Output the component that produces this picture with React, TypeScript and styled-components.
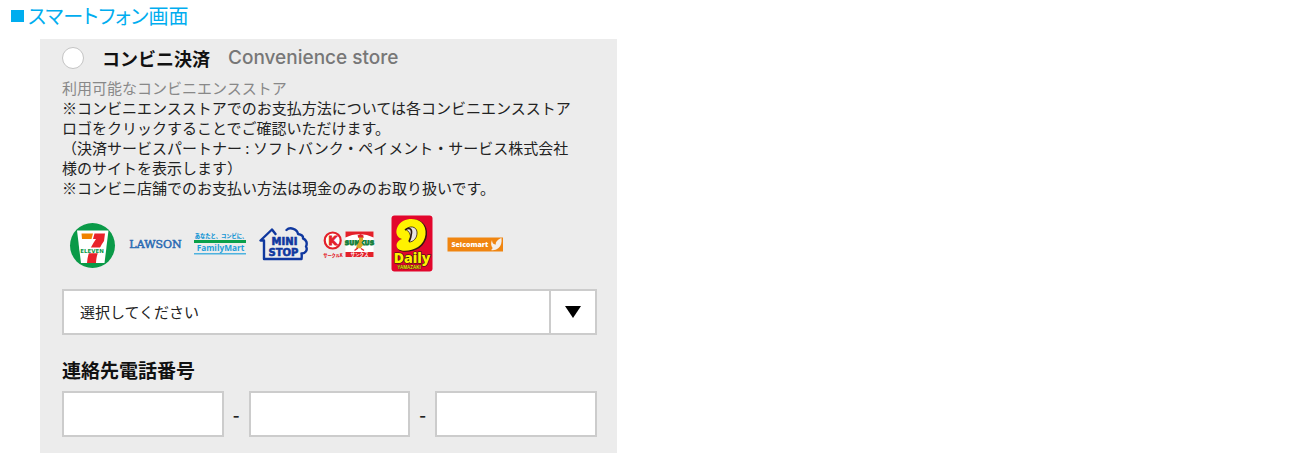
import React from "react";
import styled, { createGlobalStyle } from "styled-components";

const GlobalStyle = createGlobalStyle`
  * { box-sizing: border-box; }
  body {
    margin: 0;
    background: #fff;
    color: #222;
    font-family: "Noto Sans CJK JP", sans-serif;
    font-size: 15px;
    line-height: 20px;
  }
`;

const Page = styled.main`
  display: flow-root;
`;

const PageTitle = styled.h1`
  display: flex;
  align-items: center;
  gap: 4px;
  margin: 0;
  padding: 0 11px 7px;
  color: #00adef;
  font-size: 20px;
  font-weight: 400;
  line-height: 32px;
  font-feature-settings: "palt";

  &::before {
    content: "";
    width: 13px;
    height: 12px;
    background: currentColor;
  }
`;

const Panel = styled.form`
  width: 44%;
  margin-left: 40px;
  padding: 5px 20px 16px 22px;
  background: #ececec;
`;

const MethodLabel = styled.label`
  display: flex;
  align-items: center;
  height: 28px;
  margin-bottom: 6px;
  white-space: nowrap;
`;

const Radio = styled.input`
  appearance: none;
  flex: none;
  width: 22px;
  height: 22px;
  margin: 0 18px 0 0;
  border: 1px solid #c4c4c4;
  border-radius: 50%;
  background: #fff;

  &:checked {
    border: 6px solid #333;
  }
`;

const MethodName = styled.span`
  margin-right: 18px;
  color: #111;
  font-size: 18px;
  font-weight: 700;
`;

const MethodNameEn = styled.span`
  color: #777;
  font-family: Inter, sans-serif;
  font-size: 19px;
  font-weight: 500;
`;

const Note = styled.p<{ $muted?: boolean }>`
  margin: 0;
  color: ${(p) => (p.$muted ? "#888" : "#222")};
  white-space: nowrap;
`;

const StoreList = styled.nav`
  display: flex;
  gap: 12px;
  margin: 16px 0 17px 7px;
`;

const StoreLink = styled.a`
  display: block;
  flex: none;
  height: 58px;

  svg {
    display: block;
    overflow: visible;
  }
`;

const SelectBox = styled.div`
  display: grid;
  grid-template-columns: 1fr 46px;
  height: 46px;
  border: 2px solid #ccc;
  background: #fff;
`;

const Select = styled.select`
  grid-area: 1 / 1 / 2 / 3;
  appearance: none;
  min-width: 0;
  padding: 0 56px 0 16px;
  border: 0;
  background: transparent;
  color: #222;
  font: inherit;
`;

const SelectArrow = styled.span`
  grid-area: 1 / 2;
  display: flex;
  align-items: center;
  justify-content: center;
  border-left: 2px solid #ccc;
  pointer-events: none;
`;

const PhoneGroup = styled.fieldset`
  min-width: 0;
  margin: 0;
  padding: 0;
  border: 0;
`;

const PhoneLegend = styled.legend`
  padding: 25px 0 11px;
  color: #111;
  font-size: 19px;
  font-weight: 700;
`;

const PhoneFields = styled.div`
  display: flex;
  align-items: center;
`;

const PhoneInput = styled.input`
  flex: 1;
  min-width: 0;
  width: 0;
  height: 46px;
  padding: 0 12px;
  border: 2px solid #ccc;
  border-radius: 0;
  background: #fff;
  font: inherit;
`;

const Dash = styled.span`
  width: 25px;
  font-size: 19px;
  font-weight: 500;
  text-align: center;
`;

const SevenEleven = () => (
  <svg width="48" height="58" viewBox="0 0 48 58" aria-hidden="true">
    <circle cx="23.5" cy="31.5" r="22.5" fill="#0a9a48" />
    <path d="M8 16.500h31.500L35.500 49H12z" fill="#fff" />
    <path d="M12.500 19.500h11.500l-1.500 5.500H13z" fill="#f08300" />
    <path d="M25.500 19.500h10.500l-1 7.500c-4 6-7.500 12-8 22h-9c.5-9 4-17 9-24h-3z" fill="#e8232b" />
    <path d="M10.500 33.500h26l-.7 5.800H11.200z" fill="#fff" />
    <text x="23" y="38.500" textAnchor="middle" fontFamily="DejaVu Sans" fontWeight="700" fontSize="5.500" fill="#0a9a48">ELEVEN</text>
  </svg>
);

const Lawson = () => (
  <svg width="53" height="58" viewBox="0 0 53 58" aria-hidden="true">
    <text x="26.500" y="34" textAnchor="middle" fontFamily="DejaVu Serif" fontWeight="400" fontSize="11" fill="#2b6bb3" stroke="#2b6bb3" strokeWidth=".5">LAWSON</text>
  </svg>
);

const FamilyMart = () => (
  <svg width="53" height="58" viewBox="0 0 53 58" aria-hidden="true">
    <text x="27" y="23.500" textAnchor="middle" fontFamily="Noto Sans CJK JP" fontWeight="900" fontSize="5.300" fill="#1596d4">あなたと、コンビに、</text>
    <rect y="26" width="52" height="3" fill="#0aa04a" />
    <text x="26.500" y="37" textAnchor="middle" fontFamily="Open Sans" fontWeight="700" fontSize="8.300" fill="#1f9fda">FamilyMart</text>
    <rect y="39" width="52" height="1.500" fill="#4db2df" />
  </svg>
);

const MiniStop = () => (
  <svg width="52" height="58" viewBox="0 0 52 58" aria-hidden="true">
    <path
      d="M16.500 20L13 15.500 1.500 26.500H5V45H42.500q.5-3 0-5.500c4 0 6.500-3.500 4.500-7 1.500-3 .5-7-3-8 .5-2.500-1.500-4-5-4.500-.5-5-8-7.500-11.500-4"
      fill="none" stroke="#10389f" strokeWidth="2.400" strokeLinejoin="round" strokeLinecap="round"
    />
    <g fontFamily="DejaVu Sans" fontWeight="700" fill="#10389f" stroke="#10389f" strokeWidth=".6" textAnchor="middle">
      <text x="25.500" y="31" fontSize="10">MINI</text>
      <text x="24.500" y="41.500" fontSize="10">STOP</text>
    </g>
  </svg>
);

const CircleKSunkus = () => (
  <svg width="56" height="58" viewBox="0 0 56 58" aria-hidden="true">
    <circle cx="9.700" cy="26.500" r="8" fill="#fff" stroke="#e3202a" strokeWidth="2.200" />
    <text x="10" y="31" textAnchor="middle" fontFamily="DejaVu Sans" fontWeight="700" fontSize="12" fill="#e3202a" stroke="#e3202a" strokeWidth=".8">K</text>
    <text x="10" y="42.500" textAnchor="middle" fontFamily="Noto Sans CJK JP" fontWeight="900" fontSize="4.200" fill="#e3202a">サークルK</text>
    <rect x="22.500" y="17.500" width="28" height="25.500" fill="#fff" />
    <path d="M22.500 17.500h28v6c-8-4.500-20-4.500-28 0z" fill="#e3202a" />
    <text x="36.500" y="31" textAnchor="middle" fontFamily="DejaVu Sans" fontWeight="700" fontSize="6.300" fill="#15803b" stroke="#15803b" strokeWidth=".8">SUNKUS</text>
    <path d="M34.500 21.500l3-1.500 3 1.500v2.500h-5z" fill="#e3202a" />
    <path d="M36 23.500h4v3l-1.500 2 1.500 2.500-2.500 3.500-3-.5-2 1.500 1.500-4.500 2-3z" fill="#d9a62a" />
    <path d="M35 34l-3.500 2.500M38 34.500l3 2" stroke="#e3202a" strokeWidth="1.400" />
    <rect x="22.500" y="38" width="28" height="5" fill="#e3202a" />
    <text x="36.500" y="42.300" textAnchor="middle" fontFamily="Noto Sans CJK JP" fontWeight="700" fontSize="4.500" fill="#fff">サンクス</text>
  </svg>
);

const DailyYamazaki = () => (
  <svg width="44" height="58" viewBox="0 0 44 58" aria-hidden="true">
    <rect x=".5" y="1.500" width="41" height="56" rx="3" fill="#e2062c" />
    <path d="M8.500 12.500C12.500 4 25 3.500 31.500 8.500c7 6 6 19-3 25.500-6 4-17 5-21 2-3-4-1-8 4-10-5-2-6-8-3-13.500z" fill="#3a1410" />
    <path d="M7 12C11 4 24 3 30 8c7 6 6 19-3 25-6 4-16 5-20 2-3-4-1-8 4-10-6-1.500-7-8-4-13z" fill="#fff200" />
    <path d="M15 15.500c3-4 10.500-3.500 11 2.500.4 6-3.500 10-8 10 2-4 2.500-9-3-12.500z" fill="#e9e4e4" stroke="#2a1712" strokeWidth=".8" />
    <path d="M14 16c4-3 7-1.500 6.500 3-.3 4-1 6-2.500 8.500" fill="none" stroke="#2a1712" strokeWidth="1.600" />
    <text x="21" y="48.500" textAnchor="middle" fontFamily="Open Sans" fontWeight="800" fontSize="14" fill="#fff200" stroke="#2a1712" strokeWidth="1.200" paintOrder="stroke">Daily</text>
    <text x="18" y="55" textAnchor="middle" fontFamily="Liberation Sans" fontWeight="700" fontSize="4.500" fill="#fff200" stroke="#2a1712" strokeWidth=".6" paintOrder="stroke">YAMAZAKI</text>
  </svg>
);

const Seicomart = () => (
  <svg width="58" height="58" viewBox="0 0 58 58" aria-hidden="true">
    <rect x=".5" y="23.500" width="55.500" height="14" fill="#f08510" />
    <text x="4.500" y="33" fontFamily="Open Sans" fontWeight="800" fontSize="7" fill="#fff">Seicomart</text>
    <path d="M45 26c0 3 1.500 4.500 4 4.500-1-2.500 2-5 5.500-6.500.5 4.500-.5 8-3 10-2.500 2-5 2.500-7.500 2 1-.5 1.500-1.200 1.500-2.200-1.500-1.800-2-5-.5-7.800z" fill="#f4eee8" />
  </svg>
);

const stores = [
  { name: "セブン-イレブン", Logo: SevenEleven },
  { name: "ローソン", Logo: Lawson },
  { name: "ファミリーマート", Logo: FamilyMart },
  { name: "ミニストップ", Logo: MiniStop },
  { name: "サークルK・サンクス", Logo: CircleKSunkus },
  { name: "デイリーヤマザキ", Logo: DailyYamazaki },
  { name: "セイコーマート", Logo: Seicomart },
];

export default function App() {
  return (
    <Page>
      <GlobalStyle />
      <PageTitle>スマートフォン画面</PageTitle>
      <Panel>
        <MethodLabel>
          <Radio type="radio" name="payment" value="convenience" />
          <MethodName>コンビニ決済</MethodName>
          <MethodNameEn>Convenience store</MethodNameEn>
        </MethodLabel>
        <Note $muted>利用可能なコンビニエンスストア</Note>
        <Note>
          ※コンビニエンスストアでのお支払方法については各コンビニエンスストア
          <br />
          ロゴをクリックすることでご確認いただけます。
          <br />
          （決済サービスパートナー : ソフトバンク・ペイメント・サービス株式会社
          <br />
          様のサイトを表示します）
          <br />
          ※コンビニ店舗でのお支払い方法は現金のみのお取り扱いです。
        </Note>
        <StoreList>
          {stores.map(({ name, Logo }) => (
            <StoreLink key={name} href="#" aria-label={name}>
              <Logo />
            </StoreLink>
          ))}
        </StoreList>
        <SelectBox>
          <Select aria-label="コンビニエンスストア" defaultValue="">
            <option value="">選択してください</option>
            {stores.map(({ name }) => (
              <option key={name}>{name}</option>
            ))}
          </Select>
          <SelectArrow>
            <svg width="16" height="12" viewBox="0 0 16 12" aria-hidden="true">
              <path d="M0 0h16L8 12z" fill="#000" />
            </svg>
          </SelectArrow>
        </SelectBox>
        <PhoneGroup>
          <PhoneLegend>連絡先電話番号</PhoneLegend>
          <PhoneFields>
            <PhoneInput type="tel" aria-label="市外局番" />
            <Dash>-</Dash>
            <PhoneInput type="tel" aria-label="市内局番" />
            <Dash>-</Dash>
            <PhoneInput type="tel" aria-label="加入者番号" />
          </PhoneFields>
        </PhoneGroup>
      </Panel>
    </Page>
  );
}
